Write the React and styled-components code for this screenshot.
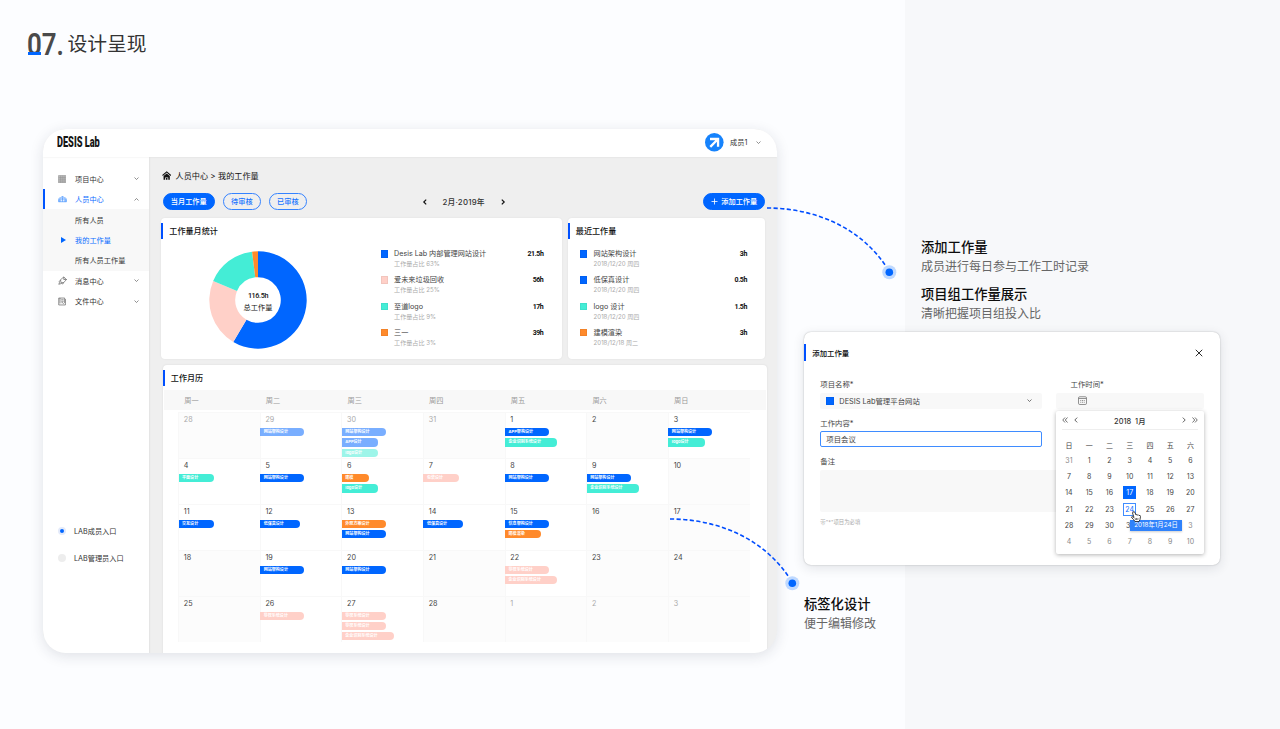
import React from 'react'
import styled, { createGlobalStyle, css } from 'styled-components'

const BLUE = '#0066ff'
const TEAL = '#44edd6'
const PINK = '#ffd0c8'
const ORANGE = '#ff8a2b'

const legend = [
  { name: 'Desis Lab 内部管理网站设计', sub: '工作量占比 63%', hours: '21.5h', color: BLUE },
  { name: '爱未来垃圾回收', sub: '工作量占比 25%', hours: '56h', color: PINK },
  { name: '至道logo', sub: '工作量占比 9%', hours: '17h', color: TEAL },
  { name: '三一', sub: '工作量占比 3%', hours: '39h', color: ORANGE }
]

const recent = [
  { name: '网站架构设计', sub: '2018/12/20 周四', hours: '3h', color: BLUE },
  { name: '低保真设计', sub: '2018/12/20 周四', hours: '0.5h', color: BLUE },
  { name: 'logo 设计', sub: '2018/12/20 周四', hours: '1.5h', color: TEAL },
  { name: '建模渲染', sub: '2018/12/18 周二', hours: '3h', color: ORANGE }
]

const b = text => ({ text, color: BLUE })
const t = text => ({ text, color: TEAL })
const p = text => ({ text, color: PINK })
const o = text => ({ text, color: ORANGE })

const month = [
  { day: 28, out: true },
  { day: 29, out: true, tags: [b('网站架构设计')] },
  { day: 30, out: true, tags: [b('网站架构设计'), b('APP设计'), t('logo设计')] },
  { day: 31, out: true },
  { day: 1, tags: [b('APP架构设计'), t('企业识别系统设计')] },
  { day: 2 },
  { day: 3, tags: [b('网站架构设计'), t('logo设计')] },
  { day: 4, tags: [t('平面设计')] },
  { day: 5, tags: [b('网站架构设计')] },
  { day: 6, tags: [o('建模'), t('logo设计')] },
  { day: 7, tags: [p('包装设计')] },
  { day: 8, tags: [b('网站架构设计')] },
  { day: 9, tags: [b('网站架构设计'), t('企业识别系统设计')] },
  { day: 10 },
  { day: 11, tags: [b('交互设计')] },
  { day: 12, tags: [b('低保真设计')] },
  { day: 13, tags: [o('外观方案设计'), b('网站架构设计')] },
  { day: 14, tags: [b('低保真设计')] },
  { day: 15, tags: [b('信息架构设计'), o('建模渲染')] },
  { day: 16 },
  { day: 17 },
  { day: 18 },
  { day: 19, tags: [b('网站架构设计')] },
  { day: 20, tags: [b('网站架构设计')] },
  { day: 21 },
  { day: 22, tags: [p('导视系统设计'), p('企业识别系统设计')] },
  { day: 23 },
  { day: 24 },
  { day: 25 },
  { day: 26, tags: [p('导视系统设计')] },
  { day: 27, tags: [p('导视系统设计'), p('导视系统设计'), p('企业识别系统设计')] },
  { day: 28 },
  { day: 1, out: true },
  { day: 2, out: true },
  { day: 3, out: true }
]

const pickerDays = [31]
for (let i = 1; i <= 31; i++) pickerDays.push(i)
// 下月 1、2 号在提示条下面，不显示
pickerDays.push('', '')
for (let i = 3; i <= 10; i++) pickerDays.push(i)

const Chevron = ({ dir = 'down', size = 5, color = '#555', width = 1.3 }) => {
  const turn = { down: 0, left: 90, up: 180, right: 270 }[dir]
  return (
    <svg width={size} height={size} viewBox="0 0 10 10" fill="none" stroke={color} strokeWidth={width}>
      <path d="M1 3l4 4 4-4" transform={`rotate(${turn} 5 5)`} />
    </svg>
  )
}

const Double = ({ right }) => (
  <svg width="6" height="6" viewBox="0 0 12 12" fill="none" stroke="#444" strokeWidth="1.5">
    <path d="M6 1L1.5 6 6 11M11 1L6.5 6 11 11" transform={right ? 'rotate(180 6 6)' : undefined} />
  </svg>
)

const ProjectIcon = () => (
  <svg width="8.4" height="8.4" viewBox="0 0 17 17" fill="#c4c4c4" stroke="#888">
    <path d="M1 1h15v15H1zM1 4.7h15M1 8.5h15M1 12.3h15M4.7 1v15M8.5 1v15M12.3 1v15" />
  </svg>
)

const PeopleIcon = () => (
  <svg width="9" height="8" viewBox="0 0 18 16" fill="none" stroke="#2f86ff" strokeWidth="1.2">
    <path d="M5.5 13.5V7a3.5 4 0 0 1 7 0v6.5M9 3v10.5M5.5 8h7M3 13.5V8M15 13.5V8M1 13.5h16" />
    <path d="M5 5.5a4 4 0 0 0-4 4v4M13 5.5a4 4 0 0 1 4 4v4" />
  </svg>
)

const MessageIcon = () => (
  <svg width="9" height="9" viewBox="0 0 18 18" fill="none" stroke="#555" strokeWidth="1.3">
    <path d="M5 7.5L11.5 2 17 7l-5.5 6-5.5.5zM11.5 2v5H17M5 8.5L2 11l1 2.5-1.5 3L7 15l2.5 1 2-3" />
  </svg>
)

const FileIcon = () => (
  <svg width="8.4" height="9" viewBox="0 0 17 18" fill="none" stroke="#555" strokeWidth="1.3">
    <path d="M4 2H1.5v14H15V4M4 2v11M4 2h9.5v10M6.5 5.5h5M6.5 8.5h5M7 11.5h3l1.5 2" />
  </svg>
)

const HomeIcon = () => (
  <svg width="9.4" height="9.4" viewBox="0 0 18 18">
    <path d="M1 8.600L9 1.800l8 6.800" fill="none" stroke="#111" strokeWidth="2" />
    <path d="M3 9.800L9 4.800l6 5V17h-3v-4.500H6V17H3z" fill="#111" />
    <path d="M7.5 13.5h3V17h-3z" fill="#111" />
  </svg>
)

const DateIcon = () => (
  <svg width="9" height="9" viewBox="0 0 18 18" fill="none" stroke="#666" strokeWidth="1.4">
    <rect x="1" y="1.5" width="16" height="15.5" rx="2.5" />
    <path d="M1.5 5h15" />
    <path d="M4.5 9h9M4.5 12.5h9" strokeDasharray="2 1.5" />
  </svg>
)

// 环形图：每段以顺时针角度表示
const slices = [
  { from: 0, to: 210.5, color: BLUE },
  { from: 210.5, to: 293, color: PINK },
  { from: 293, to: 353, color: TEAL },
  { from: 353, to: 360, color: ORANGE }
]

const slicePath = (from, to) => {
  const at = (deg, r) => {
    const a = (deg * Math.PI) / 180
    return `${49 + r * Math.sin(a)} ${49 - r * Math.cos(a)}`
  }
  const large = to - from > 180 ? 1 : 0
  return `M${at(from, 48.7)}A48.7 48.7 0 ${large} 1 ${at(to, 48.7)}L${at(to, 22.8)}A22.8 22.8 0 ${large} 0 ${at(from, 22.8)}Z`
}

const Connector = ({ x, y }) => (
  <Curve style={{ left: x, top: y }} width="136" height="76" viewBox="0 0 136 76">
    <path d="M2 2C46 2 96 19 124 65" fill="none" stroke="#004dff" strokeWidth="1.6" strokeDasharray="4.2 2.4" />
    <circle cx="124.3" cy="66.3" r="7" fill="#bfd9ff" />
    <circle cx="124.3" cy="66.3" r="3.8" fill={BLUE} />
  </Curve>
)

const EntryList = ({ items, right }) => (
  <Entries $right={right}>
    {items.map((item, i) => (
      <Entry key={i}>
        <Swatch $color={item.color} />
        <EntryText>
          <EntryName>{item.name}</EntryName>
          <EntrySub>{item.sub}</EntrySub>
        </EntryText>
        <Hours>{item.hours}</Hours>
      </Entry>
    ))}
  </Entries>
)

const Sidebar = () => (
  <Side>
    <MenuItem>
      <MenuIcon><ProjectIcon /></MenuIcon>项目中心<MenuArrow><Chevron /></MenuArrow>
    </MenuItem>
    <MenuItem $active $bar>
      <MenuIcon><PeopleIcon /></MenuIcon>人员中心<MenuArrow><Chevron dir="up" /></MenuArrow>
    </MenuItem>
    <SubMenu>
      <MenuItem><MenuIcon />所有人员</MenuItem>
      <MenuItem $active><MenuIcon><Triangle /></MenuIcon>我的工作量</MenuItem>
      <MenuItem><MenuIcon />所有人员工作量</MenuItem>
    </SubMenu>
    <MenuItem>
      <MenuIcon><MessageIcon /></MenuIcon>消息中心<MenuArrow><Chevron /></MenuArrow>
    </MenuItem>
    <MenuItem>
      <MenuIcon><FileIcon /></MenuIcon>文件中心<MenuArrow><Chevron /></MenuArrow>
    </MenuItem>
    <Entrances>
      <Radio><Dot $on />LAB成员入口</Radio>
      <Radio><Dot />LAB管理员入口</Radio>
    </Entrances>
  </Side>
)

const Picker = () => (
  <PickerBox>
    <PickerHead>
      <Double />
      <Chevron dir="left" size={6} color="#333" />
      <PickerTitle>2018&nbsp; 1月</PickerTitle>
      <Chevron dir="right" size={6} color="#333" />
      <Double right />
    </PickerHead>
    <PickerGrid>
      {'日一二三四五六'.split('').map(d => <PickerCell key={d}>{d}</PickerCell>)}
      {pickerDays.map((d, i) => (
        <PickerCell key={i} $out={i === 0 || i > 31} $selected={i === 17} $hover={i === 24}>
          <span>{d}</span>
        </PickerCell>
      ))}
    </PickerGrid>
    <Tip>2018年1月24日</Tip>
    <Hand width="10" height="11" viewBox="0 0 20 22">
      <path
        d="M4 2q2-2 4 1l2 5q2-2 3 0 2-1 3 1 3-1 3 2l-1 6-2 4H8l-3-4-4-4q0-3 3-1l2 1L3 4z"
        fill="#fff" stroke="#222" strokeWidth="1.7"
      />
      <path d="M8 14l1 4M11 14v4M14 14l-.5 4" stroke="#222" strokeWidth="1.2" />
    </Hand>
  </PickerBox>
)

const Dialog = () => (
  <DialogBox>
    <DialogHead>
      <CardTitle $dialog>添加工作量</CardTitle>
      <svg width="8" height="8" viewBox="0 0 16 16" stroke="#222" strokeWidth="1.9">
        <path d="M1.5 1.5l13 13M14.5 1.5l-13 13" />
      </svg>
    </DialogHead>
    <FormTop>
      <FormMain>
        <Label>项目名称*</Label>
        <Field>
          <Swatch $color={BLUE} $big />
          <FieldText>DESIS Lab管理平台网站</FieldText>
          <Chevron color="#333" />
        </Field>
        <Label $gap>工作内容*</Label>
        <Field $focus>项目会议</Field>
      </FormMain>
      <FormDate>
        <Label $date>工作时间*</Label>
        <Field $date><DateIcon /></Field>
        <Picker />
      </FormDate>
    </FormTop>
    <Label $gap>备注</Label>
    <TextArea />
    <Hint>带"*"项目为必填</Hint>
  </DialogBox>
)

const App = () => (
  <Page>
    <GlobalStyle />
    <Heading>
      <Number>07.</Number>
      <Underline />
      <HeadingText>设计呈现</HeadingText>
    </Heading>
    <Board>
      <Window>
        <TopBar>
          <Logo>DESIS Lab</Logo>
          <User>
            <svg width="18.6" height="18.6" viewBox="0 0 37 37">
              <circle cx="18.5" cy="18.5" r="18.5" fill="#1683fc" />
              <path d="M10 12h16v15.500M25 13L10.500 27.500" fill="none" stroke="#fff" strokeWidth="4.6" />
            </svg>
            <UserName>成员1</UserName>
            <Chevron />
          </User>
        </TopBar>
        <Body>
          <Sidebar />
          <Content>
            <Crumb><HomeIcon />人员中心 &gt; 我的工作量</Crumb>
            <Toolbar>
              <Pill $solid $w={52.5}>当月工作量</Pill>
              <Pill $w={38.3}>待审核</Pill>
              <Pill $w={38.3}>已审核</Pill>
              <MonthNav>
                <Chevron dir="left" size={6} color="#111" width={2} />
                <span>2月·2019年</span>
                <Chevron dir="right" size={6} color="#111" width={2} />
              </MonthNav>
              <Pill $solid $w={62}>
                <svg width="7" height="7" viewBox="0 0 14 14" stroke="#fff" strokeWidth="1.6">
                  <path d="M7 1v12M1 7h12" />
                </svg>
                添加工作量
              </Pill>
            </Toolbar>
            <Cards>
              <Card $w={400.5}>
                <CardTitle>工作量月统计</CardTitle>
                <StatBody>
                  <Donut>
                    <svg width="98" height="98" viewBox="0 0 98 98">
                      {slices.map(s => <path key={s.from} d={slicePath(s.from, s.to)} fill={s.color} />)}
                    </svg>
                    <DonutLabel><b>116.5h</b>总工作量</DonutLabel>
                  </Donut>
                  <EntryList items={legend} right={18.1} />
                </StatBody>
              </Card>
              <Card $w={197.5}>
                <CardTitle>最近工作量</CardTitle>
                <RecentBody><EntryList items={recent} right={18} /></RecentBody>
              </Card>
            </Cards>
            <CalendarCard>
              <CardTitle>工作月历</CardTitle>
              <WeekHead>
                {'一二三四五六日'.split('').map(d => <span key={d}>周{d}</span>)}
              </WeekHead>
              <MonthGrid>
                {month.map((c, i) => (
                  <Cell key={i} $empty={!c.tags} $out={c.out}>
                    <Day>{c.day}</Day>
                    {c.tags && c.tags.map((tag, k) => (
                      <Tag key={k} $color={tag.color} $faded={c.out}>{tag.text}</Tag>
                    ))}
                  </Cell>
                ))}
              </MonthGrid>
            </CalendarCard>
          </Content>
        </Body>
      </Window>
      <Aside>
        <Note $indent>
          <h3>添加工作量</h3>
          <p>成员进行每日参与工作工时记录</p>
          <h3>项目组工作量展示</h3>
          <p>清晰把握项目组投入比</p>
        </Note>
        <Dialog />
        <Note>
          <h3>标签化设计</h3>
          <p>便于编辑修改</p>
        </Note>
      </Aside>
    </Board>
    <Connector x={764.7} y={206} />
    <Connector x={667.7} y={516.8} />
  </Page>
)

export default App

const GlobalStyle = createGlobalStyle`
  * {
    box-sizing: border-box;
  }
  body {
    margin: 0;
    font-family: Inter, "Noto Sans CJK SC", sans-serif;
    color: #333;
  }
  svg {
    display: block;
    flex: none;
  }
`
const Page = styled.div`
  position: relative;
  width: 1280px;
  height: 729px;
  overflow: hidden;
  background: linear-gradient(90deg, #fcfdff 905px, #f7f8fa 905px);
`
const Heading = styled.div`
  position: relative;
  display: flex;
  align-items: center;
  height: 128.5px;
  padding: 0 0 41px 26.5px;
`
const Number = styled.span`
  width: 41px;
  font: 600 32px/32px Roboto, sans-serif;
  color: #4a4a4a;
  white-space: nowrap;
  transform: scaleX(0.81);
  transform-origin: left;
`
const Underline = styled.i`
  position: absolute;
  left: 28px;
  top: 51.5px;
  width: 13px;
  height: 3.5px;
  background: ${BLUE};
`
const HeadingText = styled.span`
  font-size: 19.8px;
  line-height: 30px;
  color: #333;
`
const Board = styled.div`
  display: flex;
  gap: 27px;
  padding-left: 43px;
`
const Window = styled.div`
  display: flex;
  flex-direction: column;
  width: 734px;
  height: 524.5px;
  border-radius: 23px;
  overflow: hidden;
  background: #efefef;
  box-shadow: 0 3px 14px rgba(30, 40, 60, 0.13);
`
const TopBar = styled.div`
  position: relative;
  display: flex;
  align-items: center;
  justify-content: space-between;
  height: 28px;
  flex: none;
  padding: 0 16px 0 14px;
  background: #fff;
  box-shadow: 0 0 2px rgba(0, 0, 0, 0.09);
`
const Logo = styled.span`
  width: 60px;
  font: 900 14.4px/16px Roboto, sans-serif;
  color: #151515;
  white-space: nowrap;
  transform: scaleX(0.64);
  transform-origin: left;
`
const User = styled.div`
  display: flex;
  align-items: center;
  font-size: 7.2px;
`
const UserName = styled.span`
  width: 26px;
  margin-left: 6px;
  line-height: 9px;
  padding-bottom: 1px;
`
const Body = styled.div`
  display: flex;
  flex: 1;
`
const Side = styled.div`
  display: flex;
  flex-direction: column;
  width: 106px;
  padding-top: 12.2px;
  background: #fff;
  box-shadow: 0 0 2px rgba(0, 0, 0, 0.12);
`
const MenuItem = styled.div`
  display: flex;
  align-items: center;
  height: 20.4px;
  padding: 0 10px 0 13px;
  font-size: 7.2px;
  color: ${props => (props.$active ? '#0a6cff' : '#333')};
  border-left: 2px solid ${props => (props.$bar ? '#0055ff' : 'transparent')};
`
const MenuIcon = styled.span`
  display: flex;
  width: 17px;
`
const MenuArrow = styled.span`
  margin-left: auto;
`
const SubMenu = styled.div`
  background: #f8f8f8;
`
const Triangle = styled.i`
  margin-left: 3px;
  border: 3.3px solid transparent;
  border-left: 5.5px solid ${BLUE};
  border-right: 0;
`
const Entrances = styled.div`
  display: flex;
  flex-direction: column;
  gap: 10.5px;
  margin: 212px 0 0 15px;
`
const Radio = styled.div`
  display: flex;
  align-items: center;
  gap: 8px;
  height: 16px;
  font-size: 7.2px;
`
const Dot = styled.i`
  width: 8px;
  height: 8px;
  border-radius: 50%;
  background: ${props => (props.$on ? BLUE : '#ededed')};
  border: 2px solid ${props => (props.$on ? '#e3eafa' : '#ededed')};
`
const Content = styled.div`
  flex: 1;
  padding: 10px 10px 0 12px;
`
const Crumb = styled.div`
  display: flex;
  align-items: center;
  gap: 4px;
  height: 18px;
  padding-left: 1.2px;
  font-size: 8.15px;
  color: #111;
`
const Toolbar = styled.div`
  display: flex;
  align-items: center;
  gap: 7.7px;
  margin-top: 8.6px;
  padding: 0 2px 0 1.5px;
  height: 17px;
`
const Pill = styled.span`
  display: flex;
  align-items: center;
  justify-content: center;
  gap: 3.5px;
  width: ${props => props.$w}px;
  height: 16.5px;
  padding-bottom: 0.8px;
  border: 1px solid ${props => (props.$solid ? BLUE : '#3583ff')};
  border-radius: 9px;
  font-size: 7.2px;
  font-weight: 500;
  color: ${props => (props.$solid ? '#fff' : '#1673ff')};
  background: ${props => (props.$solid ? BLUE : 'transparent')};
`
const MonthNav = styled.div`
  display: flex;
  align-items: center;
  justify-content: space-between;
  width: 84px;
  margin: 0 auto 0 107px;
  font-size: 7.8px;
  font-weight: 500;
  letter-spacing: 0.25px;
`
const Cards = styled.div`
  display: flex;
  gap: 6px;
  margin-top: 8px;
`
const Card = styled.div`
  width: ${props => props.$w}px;
  height: 141px;
  padding-top: 5px;
  border-radius: 4px;
  background: #fff;
  box-shadow: 0 0 2px rgba(0, 0, 0, 0.08);
`
const CardTitle = styled.div`
  display: flex;
  align-items: center;
  height: 16.3px;
  padding-left: 6.3px;
  padding-bottom: ${props => (props.$dialog ? 0 : 1.2)}px;
  border-left: 2px solid #0050ff;
  font-size: ${props => (props.$dialog ? 7.4 : 8.1)}px;
  font-weight: 500;
  color: #111;
`
const StatBody = styled.div`
  display: flex;
  padding: 8px 0 0 48px;
`
const RecentBody = styled.div`
  padding: 8px 0 0 12.5px;
`
const Donut = styled.div`
  display: grid;
  place-items: center;
  width: 98px;
  height: 98px;
  margin: 4px 73.5px 0 0;
  > * {
    grid-area: 1 / 1;
  }
`
const DonutLabel = styled.div`
  display: flex;
  flex-direction: column;
  align-items: center;
  font-size: 7.2px;
  line-height: 12px;
  color: #111;
  margin-top: 4px;
  b {
    font: 500 7.2px/12px Roboto, sans-serif;
    letter-spacing: -0.35px;
  }
`
const Entries = styled.div`
  flex: 1;
  padding-right: ${props => props.$right}px;
`
const Entry = styled.div`
  display: flex;
  height: 26.1px;
`
const Swatch = styled.i`
  flex: none;
  width: ${props => (props.$big ? 8 : 7.2)}px;
  height: ${props => (props.$big ? 8 : 7.2)}px;
  margin-top: ${props => (props.$big ? 0 : 3)}px;
  background: ${props => props.$color};
  border: 0.5px solid rgba(0, 0, 0, 0.05);
`
const EntryText = styled.div`
  flex: 1;
  margin-left: 6.4px;
  padding-top: 1px;
`
const EntryName = styled.div`
  font-size: 7.15px;
  line-height: 12px;
  color: #444;
`
const EntrySub = styled.div`
  font-size: 6.1px;
  line-height: 8px;
  color: #aaa;
`
const Hours = styled.span`
  padding-top: 1px;
  font: 700 7px/13px Roboto, sans-serif;
  letter-spacing: -0.4px;
  color: #111;
`
const CalendarCard = styled.div`
  width: 604px;
  height: 289px;
  margin: 6px 0 0 1.5px;
  padding-top: 5px;
  border-radius: 4px 4px 0 0;
  background: #fff;
  box-shadow: 0 0 2px rgba(0, 0, 0, 0.1);
`
const WeekHead = styled.div`
  display: grid;
  grid-template-columns: repeat(7, 81.65px);
  height: 20.3px;
  margin: 3.5px 1px 0;
  padding: 0 0 0.7px 20.7px;
  align-items: center;
  font-size: 7.2px;
  color: #999;
  background: #f8f8f8;
`
const MonthGrid = styled.div`
  display: grid;
  grid-template-columns: repeat(7, 81.65px);
  grid-auto-rows: 45.9px;
  margin: 2.3px 0 0 15.7px;
`
const Cell = styled.div`
  border: solid #f8f8f8;
  border-width: 1px 0 0 1px;
  background: ${props => (props.$empty ? '#fcfcfc' : '#fff')};
  color: ${props => (props.$out ? '#aaa' : '#444')};
`
const Day = styled.div`
  height: 14.8px;
  padding-left: 4.6px;
  font-size: 7.2px;
  line-height: 14px;
`
const Tag = styled.div`
  width: max-content;
  height: 8.2px;
  margin: 0 0 2px -0.7px;
  padding: 0 16px 0 3.5px;
  border-radius: 0 4px 4px 0;
  font-size: 4.05px;
  font-weight: 700;
  line-height: 8.4px;
  color: #fff;
  background: ${props => props.$color};
  opacity: ${props => (props.$faded ? 0.52 : 1)};
`
const Curve = styled.svg`
  position: absolute;
`
const Aside = styled.div`
  width: 416px;
`
const Note = styled.div`
  padding-left: ${props => (props.$indent ? 117 : 0)}px;
  margin-top: ${props => (props.$indent ? 108.5 : 29.2)}px;
  height: ${props => (props.$indent ? 95 : 50)}px;
  h3 {
    margin: 0;
    font-size: 13.3px;
    font-weight: 500;
    line-height: 20px;
    color: #0c0c0c;
  }
  p {
    margin: 0 0 6.8px;
    font-size: 12px;
    line-height: 20.4px;
    color: #666;
  }
`
const DialogBox = styled.div`
  width: 416px;
  height: 232.5px;
  padding: 12px 0 0;
  border-radius: 7px;
  background: #fff;
  box-shadow: 0 0 1.5px rgba(0, 0, 0, 0.3), 0 3px 12px rgba(30, 40, 60, 0.12);
`
const DialogHead = styled.div`
  display: flex;
  align-items: center;
  justify-content: space-between;
  padding-right: 17.5px;
  height: 17px;
`
const FormTop = styled.div`
  display: flex;
  justify-content: space-between;
  padding: 17px 16px 0 16.3px;
`
const FormMain = styled.div`
  width: 222px;
`
const FormDate = styled.div`
  position: relative;
  width: 148.5px;
`
const Label = styled.div`
  height: 14.5px;
  line-height: 13px;
  font-size: 7.4px;
  color: #444;
  ${props => props.$gap && css`
    margin-top: 7.5px;
    height: 14.3px;
  `}
  ${props => props.$date && css`
    padding-left: 15px;
  `}
  ${DialogBox} > & {
    margin-left: 16.3px;
  }
`
const Field = styled.div`
  display: flex;
  align-items: center;
  height: 16.6px;
  padding: 0 10px 0 6px;
  border-radius: 2px;
  font-size: 7.4px;
  color: #444;
  background: #f8f8f8;
  ${props => props.$focus && css`
    padding: 0 0 1.2px 5px;
    border: 1px solid #3f8cff;
    background: #fff;
  `}
  ${props => props.$date && css`
    padding-left: 22px;
  `}
`
const FieldText = styled.span`
  flex: 1;
  margin-left: 5px;
`
const TextArea = styled.div`
  height: 42px;
  margin: 1px 16px 0 16.3px;
  border-radius: 2px;
  background: #f8f8f8;
`
const Hint = styled.div`
  margin: 5px 0 0 16.3px;
  font-size: 5.4px;
  line-height: 10px;
  color: #aaa;
`
const PickerBox = styled.div`
  position: absolute;
  left: 0;
  top: 32.8px;
  width: 148.7px;
  height: 143px;
  padding: 0 4px;
  border-radius: 2px;
  background: #fff;
  box-shadow: 0 1px 4px rgba(0, 0, 0, 0.3);
`
const PickerHead = styled.div`
  display: flex;
  align-items: center;
  gap: 5.5px;
  height: 19.5px;
  margin: 0 2px;
  border-bottom: 1px solid #eee;
`
const PickerTitle = styled.span`
  flex: 1;
  text-align: center;
  font-size: 7.4px;
  font-weight: 500;
`
const PickerGrid = styled.div`
  display: grid;
  grid-template-columns: repeat(7, 20.25px);
  grid-auto-rows: 16.1px;
  padding-top: 6.3px;
  margin-left: -0.7px;
`
const PickerCell = styled.div`
  display: flex;
  align-items: center;
  justify-content: center;
  font-size: 7px;
  color: ${props => (props.$out ? '#888' : '#444')};
  span {
    width: 13px;
    height: 13px;
    line-height: 13px;
    text-align: center;
    ${props => props.$selected && css`
      color: #fff;
      background: ${BLUE};
    `}
    ${props => props.$hover && css`
      line-height: 11px;
      color: #0a6cff;
      border: 1px solid #3f8cff;
    `}
  }
`
const Tip = styled.div`
  position: absolute;
  left: 74.5px;
  top: 109px;
  width: 52px;
  height: 11px;
  font-size: 6.3px;
  line-height: 11px;
  text-align: center;
  white-space: nowrap;
  color: #fff;
  background: #2f82fb;
  box-shadow: 0 1px 2px rgba(0, 0, 0, 0.2);
`
const Hand = styled.svg`
  position: absolute;
  left: 75.5px;
  top: 100.5px;
`
